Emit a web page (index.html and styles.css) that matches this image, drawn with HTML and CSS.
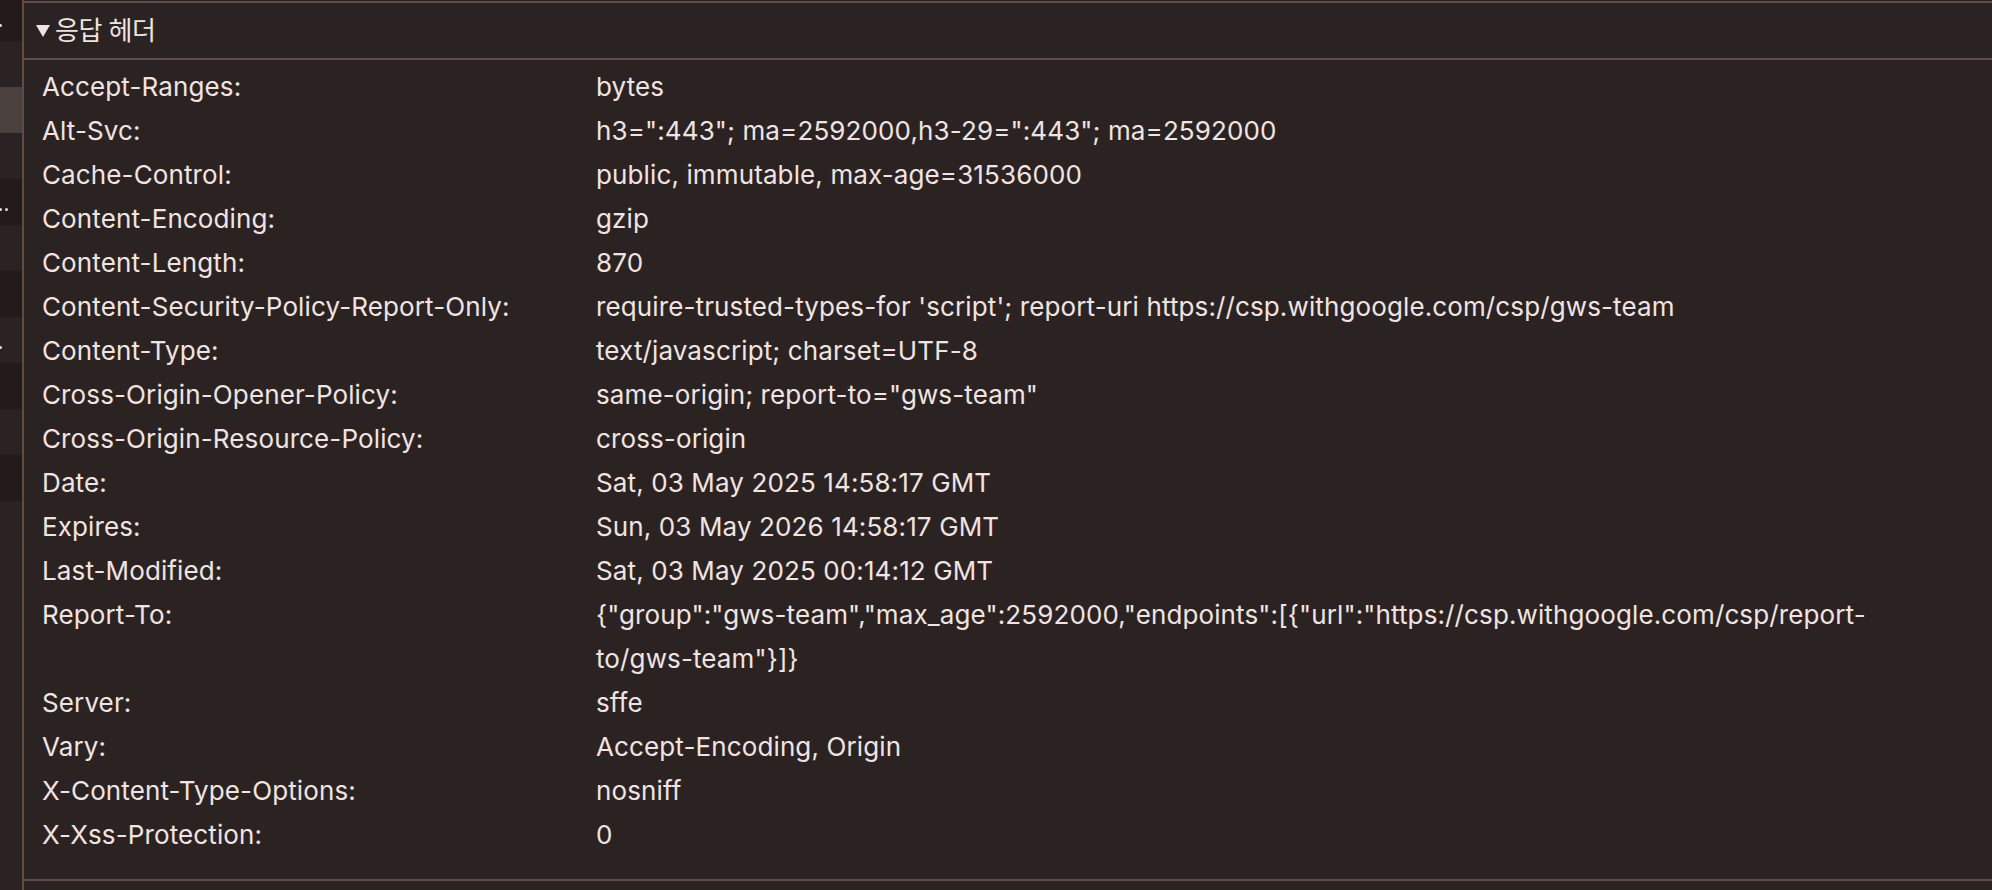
FILE: index.html
```html
<!DOCTYPE html>
<html lang="ko">
<head>
<meta charset="utf-8">
<title>응답 헤더</title>
<link rel="stylesheet" href="styles.css">
</head>
<body>
<div class="app">
  <aside class="sidebar">
    <div class="srow dark"><i class="dot d1"></i></div>
    <div class="srow"></div>
    <div class="srow selected"></div>
    <div class="srow"></div>
    <div class="srow dark"><i class="dot d1"></i><i class="dot d2"></i></div>
    <div class="srow"></div>
    <div class="srow dark"></div>
    <div class="srow"><i class="dot d1"></i></div>
    <div class="srow dark"></div>
    <div class="srow"></div>
    <div class="srow dark"></div>
  </aside>
  <main class="main">
    <section class="section">
      <div class="section-header">
        <svg class="tri" width="14" height="12" viewBox="0 0 14 12"><path d="M0 0H14L7 12Z" fill="#f0e4e2"/></svg>
        <span class="section-title">응답 헤더</span>
      </div>
      <div class="headers">
        <div class="name">Accept-Ranges:</div><div class="value">bytes</div>
        <div class="name">Alt-Svc:</div><div class="value">h3=":443"; ma=2592000,h3-29=":443"; ma=2592000</div>
        <div class="name">Cache-Control:</div><div class="value">public, immutable, max-age=31536000</div>
        <div class="name">Content-Encoding:</div><div class="value">gzip</div>
        <div class="name">Content-Length:</div><div class="value">870</div>
        <div class="name">Content-Security-Policy-Report-Only:</div><div class="value">require-trusted-types-for 'script'; report-uri https://csp.withgoogle.com/csp/gws-team</div>
        <div class="name">Content-Type:</div><div class="value">text/javascript; charset=UTF-8</div>
        <div class="name">Cross-Origin-Opener-Policy:</div><div class="value">same-origin; report-to="gws-team"</div>
        <div class="name">Cross-Origin-Resource-Policy:</div><div class="value">cross-origin</div>
        <div class="name">Date:</div><div class="value">Sat, 03 May 2025 14:58:17 GMT</div>
        <div class="name">Expires:</div><div class="value">Sun, 03 May 2026 14:58:17 GMT</div>
        <div class="name">Last-Modified:</div><div class="value">Sat, 03 May 2025 00:14:12 GMT</div>
        <div class="name">Report-To:</div><div class="value">{"group":"gws-team","max_age":2592000,"endpoints":[{"url":"https://csp.withgoogle.com/csp/report-<br>to/gws-team"}]}</div>
        <div class="name">Server:</div><div class="value">sffe</div>
        <div class="name">Vary:</div><div class="value">Accept-Encoding, Origin</div>
        <div class="name">X-Content-Type-Options:</div><div class="value">nosniff</div>
        <div class="name">X-Xss-Protection:</div><div class="value">0</div>
      </div>
    </section>
  </main>
</div>
</body>
</html>
```
FILE: styles.css
```css
html, body {
  margin: 0;
  padding: 0;
  height: 100%;
  background: #2b2322;
  overflow: hidden;
}
body {
  font-family: Inter, "Noto Sans CJK KR", sans-serif;
  color: #f0e4e2;
}
.app {
  display: flex;
  height: 890px;
}
.sidebar {
  width: 22px;
  flex: none;
  border-right: 2px solid #5e4c48;
  overflow: hidden;
  display: flex;
  flex-direction: column;
}
.srow {
  height: 46px;
  flex: none;
  position: relative;
  background: #2b2322;
}
.srow:first-child {
  height: 41px;
}
.srow.dark {
  background: #221b1a;
}
.srow.selected {
  background: #4a403e;
}
.dot {
  position: absolute;
  width: 3px;
  height: 3px;
  border-radius: 50%;
  background: #e6dad7;
  top: 29px;
}
.dot.d1 {
  left: -1px;
}
.dot.d2 {
  left: 5px;
}
.srow:first-child .dot {
  top: 24px;
}
.main {
  flex: 1;
  padding-top: 1px;
}
.section {
  border-top: 2px solid #5e4c48;
  border-bottom: 2px solid #5e4c48;
}
.section-header {
  height: 55px;
  border-bottom: 2px solid #5e4c48;
  display: flex;
  align-items: center;
  padding-left: 12px;
}
.tri {
  display: block;
  margin-top: 0;
  margin-right: 5px;
}
.section-title {
  font-family: "Noto Sans CJK KR", sans-serif;
  font-size: 26px;
  line-height: 1;
  margin-top: -4px;
  letter-spacing: -0.5px;
}
.headers {
  display: grid;
  grid-template-columns: 554px 1fr;
  padding: 5px 24px 22px 18px;
  font-size: 26px;
  letter-spacing: 0.12px;
  line-height: 44px;
}
.name, .value {
  white-space: nowrap;
}
```
